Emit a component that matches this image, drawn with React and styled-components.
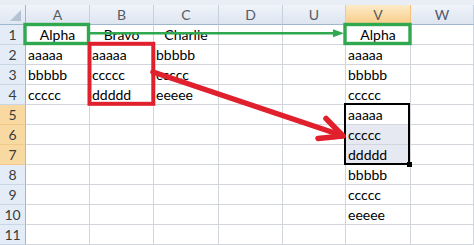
import React from "react";
import styled, { createGlobalStyle, css } from "styled-components";

const GlobalStyle = createGlobalStyle`
  html, body {
    margin: 0;
    padding: 0;
    background: #ffffff;
    overflow: hidden;
  }
`;

const COLUMNS = [
  { name: "A", width: 64 },
  { name: "B", width: 64 },
  { name: "C", width: 65 },
  { name: "D", width: 64 },
  { name: "U", width: 63 },
  { name: "V", width: 65 },
  { name: "W", width: 63 },
];

const DATA = {
  1: { A: "Alpha", B: "Bravo", C: "Charlie", V: "Alpha" },
  2: { A: "aaaaa", B: "aaaaa", C: "bbbbb", V: "aaaaa" },
  3: { A: "bbbbb", B: "ccccc", C: "ccccc", V: "bbbbb" },
  4: { A: "ccccc", B: "ddddd", C: "eeeee", V: "ccccc" },
  5: { V: "aaaaa" },
  6: { V: "ccccc" },
  7: { V: "ddddd" },
  8: { V: "bbbbb" },
  9: { V: "ccccc" },
  10: { V: "eeeee" },
  11: {},
};

const ROWS = Object.keys(DATA).map(Number);
const SELECTED_ROWS = [5, 6, 7];
const SELECTED_COL = "V";

const Sheet = styled.div`
  position: relative;
  width: 474px;
  height: 245px;
  overflow: hidden;
  font-family: Lato, "Open Sans", sans-serif;
  font-size: 14px;
  color: #000;
`;

const TopStrip = styled.div`
  height: 5px;
  background: #e9eef6;
`;

const Grid = styled.div`
  display: grid;
  grid-template-columns: 26px ${COLUMNS.map((c) => `${c.width}px`).join(" ")};
  grid-template-rows: 20px repeat(${ROWS.length}, 20px);
`;

const Corner = styled.div`
  box-sizing: border-box;
  display: flex;
  align-items: flex-end;
  justify-content: flex-end;
  padding: 0 4px 3px 0;
  background: linear-gradient(#eef3f9, #dfe7f1);
  border-right: 1px solid #9eb6ce;
  border-bottom: 1px solid #9eb6ce;
`;

const ColHead = styled.div`
  box-sizing: border-box;
  display: flex;
  align-items: center;
  justify-content: center;
  font-size: 14px;
  color: #555b66;
  background: linear-gradient(#f0f4fa, #dde5f0);
  border-right: 1px solid #c3d0e0;
  border-bottom: 1px solid #9eb6ce;
  ${(p) =>
    p.$active &&
    css`
      background: linear-gradient(#fdebc8, #f8cd88);
      border-bottom-color: #f0b050;
      border-right-color: #f2c27a;
    `}
`;

const RowHead = styled.div`
  box-sizing: border-box;
  display: flex;
  align-items: center;
  justify-content: center;
  font-size: 14px;
  color: #3c3c3c;
  background: #e4ecf7;
  border-right: 1px solid #9eb6ce;
  border-bottom: 1px solid #c9d6e6;
  ${(p) =>
    p.$active &&
    css`
      background: #f9d9a2;
      border-right-color: #f0b050;
      border-bottom-color: #f3c98a;
    `}
`;

const Cell = styled.div`
  box-sizing: border-box;
  padding: 0 2px;
  line-height: 19px;
  white-space: nowrap;
  overflow: visible;
  text-align: ${(p) => (p.$center ? "center" : "left")};
  background: ${(p) => (p.$shade ? "#e6e9f2" : "#ffffff")};
  border-right: 1px solid #d2d5dc;
  border-bottom: 1px solid #d2d5dc;
`;

const Selection = styled.div`
  position: absolute;
  left: 344px;
  top: 103px;
  width: 66px;
  height: 62px;
  box-sizing: border-box;
  border: 2px solid #000;
  pointer-events: none;
`;

const FillHandle = styled.div`
  position: absolute;
  right: -4px;
  bottom: -4px;
  width: 5px;
  height: 5px;
  background: #000;
`;

const Overlay = styled.svg`
  position: absolute;
  left: 0;
  top: 0;
  pointer-events: none;
`;

function CornerMark() {
  return (
    <svg width="11" height="11" viewBox="0 0 11 11">
      <polygon points="11,0 11,11 0,11" fill="#b4c2d4" />
    </svg>
  );
}

function Annotations() {
  const green = "#2fa84f";
  const red = "#e0202c";
  return (
    <Overlay width="474" height="245" viewBox="0 0 474 245">
      {/* header copy: A1 -> V1 */}
      <rect x="25" y="24.5" width="63.5" height="19" fill="none" stroke={green} strokeWidth="3.4" />
      <rect x="345" y="24.5" width="65" height="19" fill="none" stroke={green} strokeWidth="3.4" />
      <line x1="90" y1="33.3" x2="338" y2="33.3" stroke={green} strokeWidth="2.6" />
      <polygon points="333,29.3 344,33.3 333,37.3" fill={green} />

      {/* moved block: B2:B4 -> V5:V7 */}
      <rect x="89.5" y="43.8" width="63.8" height="60" fill="none" stroke={red} strokeWidth="4" />
      <line x1="153" y1="72" x2="342" y2="135.5" stroke={red} strokeWidth="5.5" strokeLinecap="round" />
      <polyline
        points="326,118.5 343,136 318,138.5"
        fill="none"
        stroke={red}
        strokeWidth="5.5"
        strokeLinecap="round"
        strokeLinejoin="round"
      />
    </Overlay>
  );
}

export default function App() {
  return (
    <Sheet>
      <GlobalStyle />
      <TopStrip />
      <Grid>
        <Corner>
          <CornerMark />
        </Corner>
        {COLUMNS.map((c) => (
          <ColHead key={c.name} $active={c.name === SELECTED_COL}>
            {c.name}
          </ColHead>
        ))}
        {ROWS.map((r) => (
          <React.Fragment key={r}>
            <RowHead $active={SELECTED_ROWS.includes(r)}>{r}</RowHead>
            {COLUMNS.map((c) => (
              <Cell
                key={c.name}
                $center={r === 1}
                $shade={c.name === SELECTED_COL && (r === 6 || r === 7)}
              >
                {DATA[r][c.name] || ""}
              </Cell>
            ))}
          </React.Fragment>
        ))}
      </Grid>
      <Selection>
        <FillHandle />
      </Selection>
      <Annotations />
    </Sheet>
  );
}
